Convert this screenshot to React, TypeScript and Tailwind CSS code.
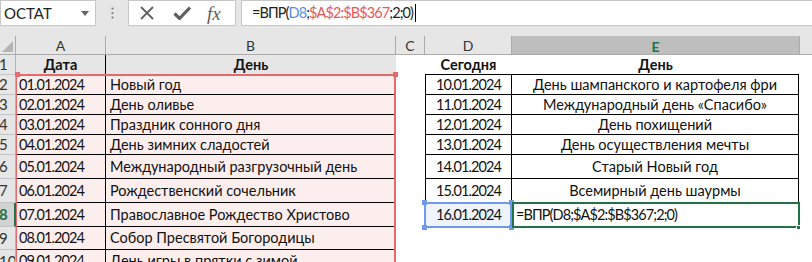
import React from 'react'

// column widths in px: row header, A, B, C, D, E
const COLS = { rh: 16, a: 90, b: 290, c: 29, d: 87, e: 287 }

interface Row {
  n: number
  h: number
  a: string
  b: string
  d?: string
  e?: string
}

const ROWS: Row[] = [
  { n: 2, h: 20, a: '01.01.2024', b: 'Новый год', d: '10.01.2024', e: 'День шампанского и картофеля фри' },
  { n: 3, h: 20, a: '02.01.2024', b: 'День оливье', d: '11.01.2024', e: 'Международный день «Спасибо»' },
  { n: 4, h: 20, a: '03.01.2024', b: 'Праздник сонного дня', d: '12.01.2024', e: 'День похищений' },
  { n: 5, h: 20, a: '04.01.2024', b: 'День зимних сладостей', d: '13.01.2024', e: 'День осуществления мечты' },
  { n: 6, h: 24, a: '05.01.2024', b: 'Международный разгрузочный день', d: '14.01.2024', e: 'Старый Новый год' },
  { n: 7, h: 24, a: '06.01.2024', b: 'Рождественский сочельник', d: '15.01.2024', e: 'Всемирный день шаурмы' },
  { n: 8, h: 24, a: '07.01.2024', b: 'Православное Рождество Христово' },
  { n: 9, h: 23, a: '08.01.2024', b: 'Собор Пресвятой Богородицы' },
  { n: 10, h: 23, a: '09.01.2024', b: 'День игры в прятки с зимой' },
]

const FormulaBar = () => (
  <div className="flex h-[26px] bg-[#e6e6e6]">
    {/* Name box */}
    <div className="flex w-[96px] items-center justify-between border border-[#c6c6c6] bg-white pl-[3px] pr-[6px]">
      <span className="text-[15px] text-[#222]">ОСТАТ</span>
      <svg width="8" height="5" viewBox="0 0 8 5">
        <path d="M0 0h8L4 5z" fill="#666" />
      </svg>
    </div>
    <div className="flex w-[32px] items-center justify-center">
      <svg width="3" height="12" viewBox="0 0 3 12">
        <circle cx="1.5" cy="1.5" r="1.1" fill="#777" />
        <circle cx="1.5" cy="6" r="1.1" fill="#777" />
        <circle cx="1.5" cy="10.5" r="1.1" fill="#777" />
      </svg>
    </div>
    {/* Cancel / enter / fx */}
    <div className="flex w-[108px] items-center border border-[#c6c6c6] bg-white">
      <svg className="ml-[11px]" width="14" height="14" viewBox="0 0 14 14">
        <path d="M1 1l12 12M13 1L1 13" stroke="#606060" strokeWidth="1.8" />
      </svg>
      <svg className="ml-[19px]" width="18" height="14" viewBox="0 0 18 14">
        <path d="M1.5 7.5l5 5L17 1.5" stroke="#606060" strokeWidth="3.2" fill="none" />
      </svg>
      <span
        className="ml-[16px] text-[19px] italic leading-none text-[#606060]"
        style={{ fontFamily: '"Liberation Serif", "DejaVu Serif", serif' }}
      >
        fx
      </span>
    </div>
    <div className="w-[5px]" />
    {/* Formula */}
    <div className="flex flex-1 items-center border border-r-0 border-[#c6c6c6] bg-white pl-[10px]">
      <span className="text-[14.5px] tracking-[-0.9px] text-[#222]">
        =ВПР(<span className="text-[#5a8be6]">D8</span>;<span className="text-[#e8585a]">$A$2:$B$367</span>;2;0)
      </span>
      <span className="ml-[2px] h-[18px] w-px bg-black" />
    </div>
  </div>
)

const ColumnHeaders = () => (
  <div className="flex h-[19px] border-b border-[#ababab] bg-[#e6e6e6] text-[14px] text-[#333]">
    <div className="relative border-r border-[#ababab]" style={{ width: COLS.rh }}>
      <svg className="absolute bottom-[2px] right-[2px]" width="11" height="11" viewBox="0 0 11 11">
        <path d="M11 0v11H0z" fill="#b4b4b4" />
      </svg>
    </div>
    <div className="flex items-center justify-center border-r border-[#ababab]" style={{ width: COLS.a }}>A</div>
    <div className="flex items-center justify-center border-r border-[#ababab]" style={{ width: COLS.b }}>B</div>
    <div className="flex items-center justify-center border-r border-[#ababab]" style={{ width: COLS.c }}>C</div>
    <div className="flex items-center justify-center border-r border-[#ababab]" style={{ width: COLS.d }}>D</div>
    <div className="flex flex-col bg-[#bebebe]" style={{ width: COLS.e }}>
      <div className="flex flex-1 items-center justify-center font-bold text-[#217346]">E</div>
      <div className="h-[2px] bg-[#217346]" />
    </div>
    <div className="flex-1 border-l border-[#ababab]" />
  </div>
)

const RowHeader = ({ n, active }: { n: number; active?: boolean }) =>
  active ? (
    <div
      className="flex shrink-0 items-center overflow-hidden border-b border-r-2 border-[#c4c4c4] border-r-[#217346] bg-[#d2d2d2] text-[15px] font-bold text-[#217346]"
      style={{ width: COLS.rh }}
    >
      <span className="-ml-[1px]">{n}</span>
    </div>
  ) : (
    <div
      className="flex shrink-0 items-center overflow-hidden border-b border-r border-[#c4c4c4] border-r-[#b4b4b4] bg-[#e6e6e6] text-[15px] text-[#333]"
      style={{ width: COLS.rh }}
    >
      <span className="-ml-[1px] whitespace-nowrap">{n}</span>
    </div>
  )

const Date = ({ children }: { children: React.ReactNode }) => (
  <span className="text-[14.5px] tracking-[-0.9px]">{children}</span>
)

export default function App() {
  return (
    <div
      className="h-[262px] w-[812px] overflow-hidden bg-[#e6e6e6] text-black"
      style={{ fontFamily: 'Lato, "Open Sans", "Noto Sans", sans-serif' }}
    >
      <FormulaBar />
      <div className="h-[10px]" />
      <ColumnHeaders />

      <div className="relative bg-white text-[14.5px] text-[#111]">
        {/* Row 1: headers */}
        <div className="flex h-[20px]">
          <RowHeader n={1} />
          <div className="flex shrink-0 items-center justify-center border-r border-black bg-[#e7e6e6] font-bold" style={{ width: COLS.a }}>
            Дата
          </div>
          <div className="flex shrink-0 items-center justify-center bg-[#e7e6e6] font-bold" style={{ width: COLS.b }}>
            День
          </div>
          <div className="shrink-0" style={{ width: COLS.c }} />
          <div className="flex shrink-0 items-center justify-center border-b border-black font-bold" style={{ width: COLS.d }}>
            Сегодня
          </div>
          <div className="flex shrink-0 items-center justify-center border-b border-black font-bold" style={{ width: COLS.e }}>
            День
          </div>
          <div className="flex-1" />
        </div>

        {ROWS.map(r => (
          <div key={r.n} className="flex" style={{ height: r.h }}>
            <RowHeader n={r.n} active={r.n === 8} />
            <div className="flex shrink-0 items-center border-b border-r border-black bg-[#fdeeee] pl-[3px] whitespace-nowrap" style={{ width: COLS.a }}>
              <Date>{r.a}</Date>
            </div>
            <div className="flex shrink-0 items-center border-b border-black bg-[#fdeeee] pl-[4px] whitespace-nowrap" style={{ width: COLS.b }}>
              {r.b}
            </div>
            <div className="shrink-0" style={{ width: COLS.c }} />
            {r.d ? (
              <>
                <div className="flex shrink-0 items-center justify-center border-b border-l border-r border-black" style={{ width: COLS.d }}>
                  <Date>{r.d}</Date>
                </div>
                <div className="flex shrink-0 items-center justify-center border-b border-r border-black whitespace-nowrap" style={{ width: COLS.e }}>
                  {r.e}
                </div>
              </>
            ) : r.n === 8 ? (
              <>
                <div className="flex shrink-0 items-center justify-center bg-[#eef3fc]" style={{ width: COLS.d }}>
                  <Date>16.01.2024</Date>
                </div>
                <div className="flex shrink-0 items-center pl-[4px] whitespace-nowrap" style={{ width: COLS.e }}>
                  <span className="tracking-[-0.9px]">=ВПР(D8;$A$2:$B$367;2;0)</span>
                </div>
              </>
            ) : (
              <>
                <div className="shrink-0" style={{ width: COLS.d }} />
                <div className="shrink-0" style={{ width: COLS.e }} />
              </>
            )}
            <div className="flex-1" />
          </div>
        ))}

        {/* Reference range A2:B367 (red) */}
        <div className="pointer-events-none absolute left-[16px] top-[19px] h-[300px] w-[380px] border-l border-r-2 border-t-2 border-[#e8696b]" />
        <div className="absolute left-[15px] top-[17px] h-[5px] w-[5px] bg-[#e8696b]" />
        <div className="absolute left-[393px] top-[17px] h-[5px] w-[5px] bg-[#e8696b]" />

        {/* Reference D8 (blue) */}
        <div className="pointer-events-none absolute left-[424px] top-[147px] h-[26px] w-[88px] border-2 border-[#6f9ae8]" />
        <div className="absolute left-[422px] top-[145px] h-[5px] w-[5px] bg-[#6f9ae8]" />
        <div className="absolute left-[509px] top-[145px] h-[5px] w-[5px] bg-[#6f9ae8]" />
        <div className="absolute left-[422px] top-[170px] h-[5px] w-[5px] bg-[#6f9ae8]" />
        <div className="absolute left-[509px] top-[170px] h-[5px] w-[5px] bg-[#6f9ae8]" />

        {/* Active cell E8 (green) */}
        <div className="pointer-events-none absolute left-[512px] top-[147px] h-[26px] w-[288px] border-2 border-[#217346]" />
        <div className="absolute left-[796px] top-[170px] h-[5px] w-[5px] border border-white bg-[#217346]" />
      </div>
    </div>
  )
}
